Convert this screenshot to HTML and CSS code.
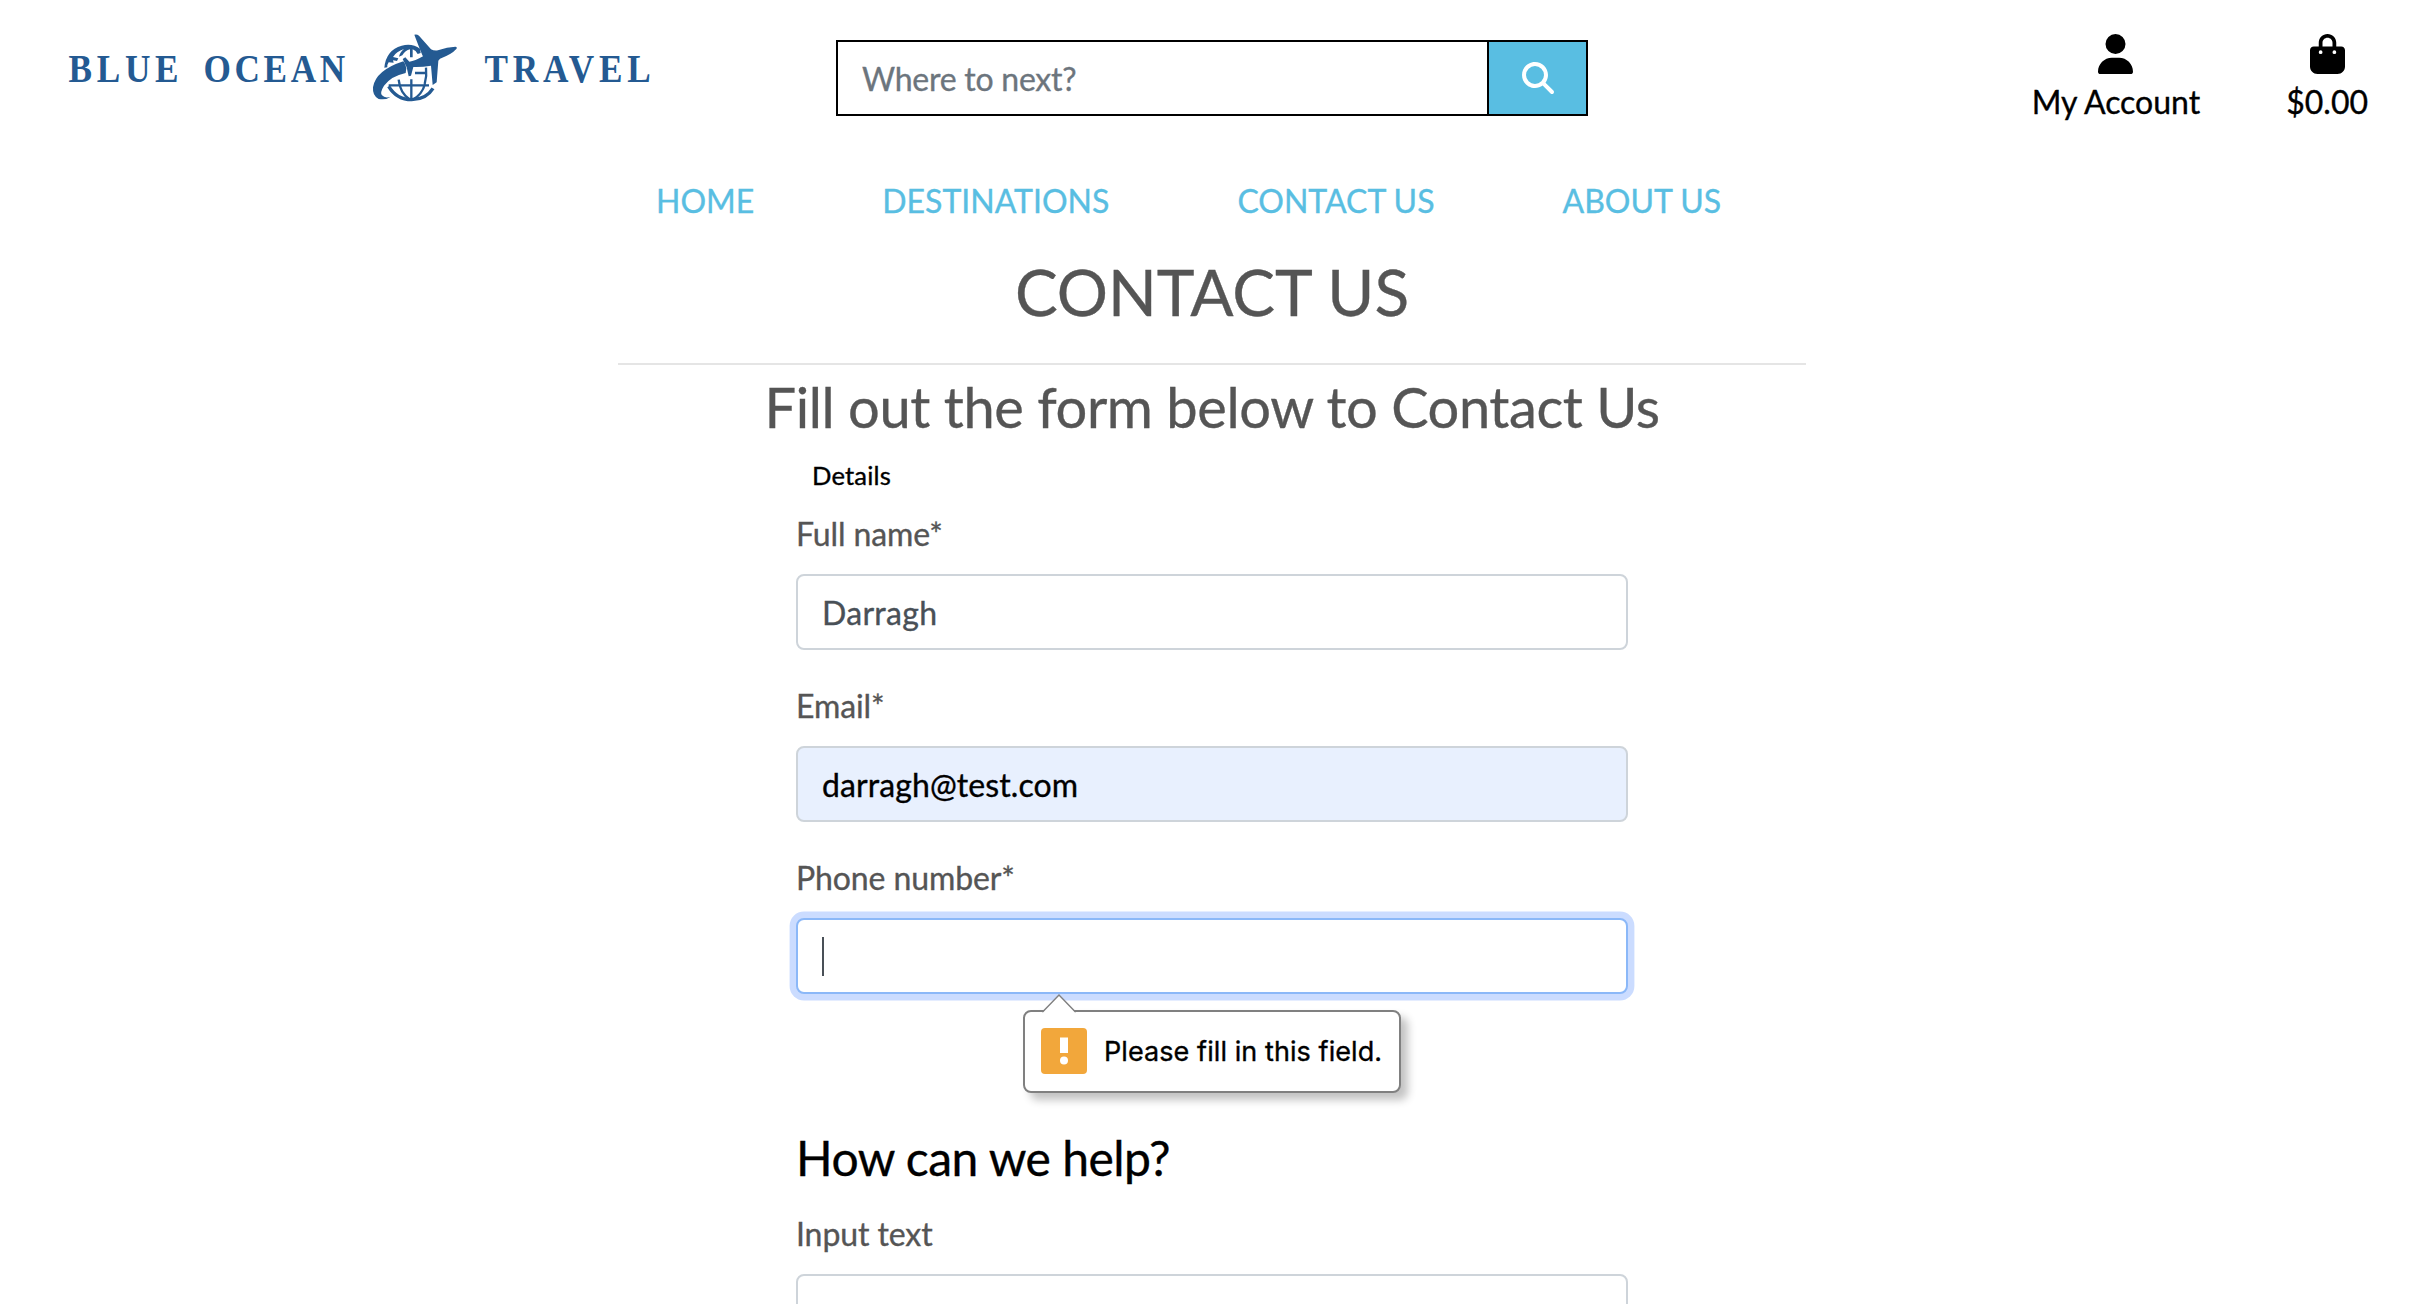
FILE: index.html
```html
<!DOCTYPE html>
<html lang="en">
<head>
<meta charset="utf-8">
<title>Blue Ocean Travel - Contact Us</title>
<link rel="stylesheet" href="styles.css">
</head>
<body>
<header class="header">
  <a class="logo" aria-label="Blue Ocean Travel">
    <svg width="600" height="84" viewBox="60 25 600 84">
      <g class="logo-text">
        <text transform="translate(68.5 81.5) scale(.88 1)" textLength="125" lengthAdjust="spacing">BLUE</text>
        <text transform="translate(203.500 81.5) scale(.88 1)" textLength="161" lengthAdjust="spacing">OCEAN</text>
        <text transform="translate(484.500 81.5) scale(.88 1)" textLength="189" lengthAdjust="spacing">TRAVEL</text>
      </g>
      <g transform="translate(360 25) scale(.33333)" fill="#245a92">
        <path d="M163 29Q171 27 177 32L213 73Q222 78 234 76Q262 66 286 65Q293 66 289 72Q275 88 240 101L235 107L230 172L218 180L213 122Q185 127 160 126L153 152L146 154L140 127L128 102L136 97L148 110Q165 108 189 94Q183 82 163 29Z"/>
        <path d="M130 109Q137 116 139 130L137 144Q94 153 72 182Q59 203 66 211Q75 221 92 215Q78 226 56 222Q37 213 39 187Q47 136 130 109Z"/>
        <path d="M73 128Q78 75 125 62Q157 54 180 71L182 84L173 87Q168 76 158 73V97H150V73Q136 76 127 91L117 95Q119 83 132 72Q109 79 99 96L115 100L111 108L99 106L101 113L86 112Q80 121 82 127Z"/>
        <g fill="none" stroke="#245a92" stroke-width="7">
          <path d="M165 144H198M198 128Q201 153 194 177M86 181H207M154 163V223M116 164Q120 205 150 224M195 177Q186 209 158 224"/>
          <path d="M86 184Q110 224 155 224Q199 223 219 190" stroke-width="10"/>
        </g>
      </g>
    </svg>
  </a>
  <form class="search">
    <input class="search-input" type="text" placeholder="Where to next?" aria-label="Search">
    <button class="search-button" type="button" aria-label="Search">
      <svg width="32" height="32" viewBox="0 0 512 512"><path fill="#fff" d="M416 208c0 45.900-14.900 88.300-40 122.700L502.600 457.400c12.500 12.500 12.500 32.800 0 45.300s-32.800 12.500-45.300 0L330.700 376c-34.400 25.200-76.800 40-122.700 40C93.100 416 0 322.900 0 208S93.100 0 208 0S416 93.100 416 208zM208 352a144 144 0 1 0 0-288 144 144 0 1 0 0 288z"/></svg>
    </button>
  </form>
  <div class="links">
    <a class="link">
      <svg width="35" height="40" viewBox="0 0 448 512"><path d="M224 256A128 128 0 1 0 224 0a128 128 0 1 0 0 256zm-45.700 48C79.800 304 0 383.800 0 482.300C0 498.700 13.300 512 29.700 512H418.300c16.400 0 29.700-13.300 29.700-29.700C448 383.800 368.200 304 269.700 304H178.300z"/></svg>
      <span>My Account</span>
    </a>
    <a class="link">
      <svg width="35" height="40" viewBox="0 0 448 512"><path d="M160 112c0-35.300 28.700-64 64-64s64 28.700 64 64v48H160V112zm-48 48H48c-26.500 0-48 21.500-48 48V416c0 53 43 96 96 96H352c53 0 96-43 96-96V208c0-26.500-21.500-48-48-48H336V112C336 50.100 285.900 0 224 0S112 50.100 112 112v48zm24 48a24 24 0 1 1 0 48 24 24 0 1 1 0-48zm152 24a24 24 0 1 1 48 0 24 24 0 1 1 -48 0z"/></svg>
      <span>$0.00</span>
    </a>
  </div>
</header>
<nav class="nav">
  <a>HOME</a><a>DESTINATIONS</a><a>CONTACT US</a><a>ABOUT US</a>
</nav>
<main class="content">
  <h1 class="title">CONTACT US</h1>
  <hr class="rule">
  <h2 class="subtitle">Fill out the form below to Contact Us</h2>
  <form class="form">
    <div class="legend">Details</div>
    <div class="group">
      <label class="label">Full name*</label>
      <div class="field name">Darragh</div>
    </div>
    <div class="group">
      <label class="label">Email*</label>
      <div class="field autofilled">darragh@test.com</div>
    </div>
    <div class="group">
      <label class="label">Phone number*</label>
      <div class="field focused"><span class="caret"></span></div>
      <div class="bubble">
        <svg class="bubble-arrow" width="34" height="19" viewBox="0 0 34 19"><path d="M0 19L1 18L17 1L33 18L34 19Z" fill="#fff"/><path d="M0 17.500H1L17 1L33 17.500H34" fill="none" stroke="#808080" stroke-width="1.400"/></svg>
        <svg class="bubble-icon" width="46" height="46" viewBox="0 0 46 46"><rect width="46" height="46" rx="4" fill="#f2a73b"/><path d="M19 9.500H27V25H19Z" fill="#fff"/><circle cx="23" cy="32.500" r="4" fill="#fff"/></svg>
        <span class="bubble-text">Please fill in this field.</span>
      </div>
    </div>
    <h3 class="question">How can we help?</h3>
    <div class="group">
      <label class="label">Input text</label>
      <div class="field"></div>
    </div>
  </form>
</main>
</body>
</html>
```
FILE: styles.css
```css
* { box-sizing: border-box; }
html { overflow: hidden; }
body {
  margin: 0;
  height: 1304px;
  overflow: hidden;
  background: #fff;
  color: #000;
  font: 400 32px/48px Lato, sans-serif;
  -webkit-text-stroke: .35px;
}
.header {
  display: grid;
  grid-template-columns: 776px 752px 1fr;
  align-items: start;
  height: 176px;
  padding: 25px 52px 0 60px;
}
.logo-text {
  font: 700 40px "Liberation Serif", serif;
  fill: #245a92;
  -webkit-text-stroke: 0;
}
.search {
  display: flex;
  height: 76px;
  margin-top: 15px;
  border: 2px solid #000;
}
.search-input {
  flex: 1;
  min-width: 0;
  padding: 2px 24px 0;
  border: 0;
  border-right: 2px solid #000;
  border-radius: 0;
  background: #fff;
  font: inherit;
  letter-spacing: -.25px;
}
.search-input::placeholder { color: #6c757d; opacity: 1; }
.search-button {
  display: flex;
  align-items: center;
  justify-content: center;
  width: 97px;
  padding: 0;
  border: 0;
  background: #59bee2;
}
.links {
  display: flex;
  justify-content: flex-end;
  gap: 86px;
  padding-top: 9px;
}
.link {
  display: flex;
  flex-direction: column;
  align-items: center;
  gap: 4px;
}
.nav {
  display: flex;
  gap: 128px;
  height: 48px;
  padding: 1px 0 0 656px;
  color: #59bee2;
}
.content {
  width: 1188px;
  margin-left: 618px;
}
.title, .subtitle {
  margin: 0;
  color: #555;
  font-weight: 400;
  text-align: center;
}
.title {
  padding-top: 29px;
  font-size: 64px;
  line-height: 77px;
}
.rule {
  height: 2px;
  margin: 33px 0 8px;
  border: 0;
  background: #e5e5e5;
}
.subtitle { font-size: 56px; line-height: 67px; letter-spacing: -.43px; }
.form { width: 832px; margin: 0 auto; }
.legend {
  margin: 16px 0 15px;
  padding-left: 16px;
  font-size: 25.6px;
  line-height: 39px;
  letter-spacing: .15px;
}
.group { position: relative; margin-bottom: 32px; }
.label { display: block; margin-bottom: 16px; color: #555; letter-spacing: -.1px; }
.field {
  display: flex;
  align-items: center;
  height: 76px;
  padding: 2px 24px 0;
  border: 2px solid #ced4da;
  border-radius: 8px;
  background: #fff;
  color: #495057;
}
.name { letter-spacing: .3px; }
.autofilled { background: #e8f0fe; color: #000; letter-spacing: .1px; }
.focused { padding-top: 0; border-color: #8bb8f8; box-shadow: 0 0 0 6.4px #cbdcff; }
.caret { width: 2px; height: 39px; background: #495057; }
.bubble {
  position: absolute;
  top: 156px;
  left: 227px;
  display: flex;
  align-items: center;
  gap: 17px;
  width: 378px;
  height: 83px;
  padding: 0 16px;
  border: 2px solid #808080;
  border-radius: 8px;
  background: #fff;
  box-shadow: 7px 7px 9px rgba(0, 0, 0, .24);
}
.bubble-arrow { position: absolute; top: -18px; left: 17px; }
.bubble-icon { margin-bottom: 2px; }
.bubble-text {
  font: 400 27px/32px Inter, sans-serif;
  letter-spacing: .08px;
  white-space: nowrap;
}
.question {
  margin: 135px 0 23px;
  font-size: 48px;
  font-weight: 400;
  line-height: 58px;
  letter-spacing: -.5px;
}
```
